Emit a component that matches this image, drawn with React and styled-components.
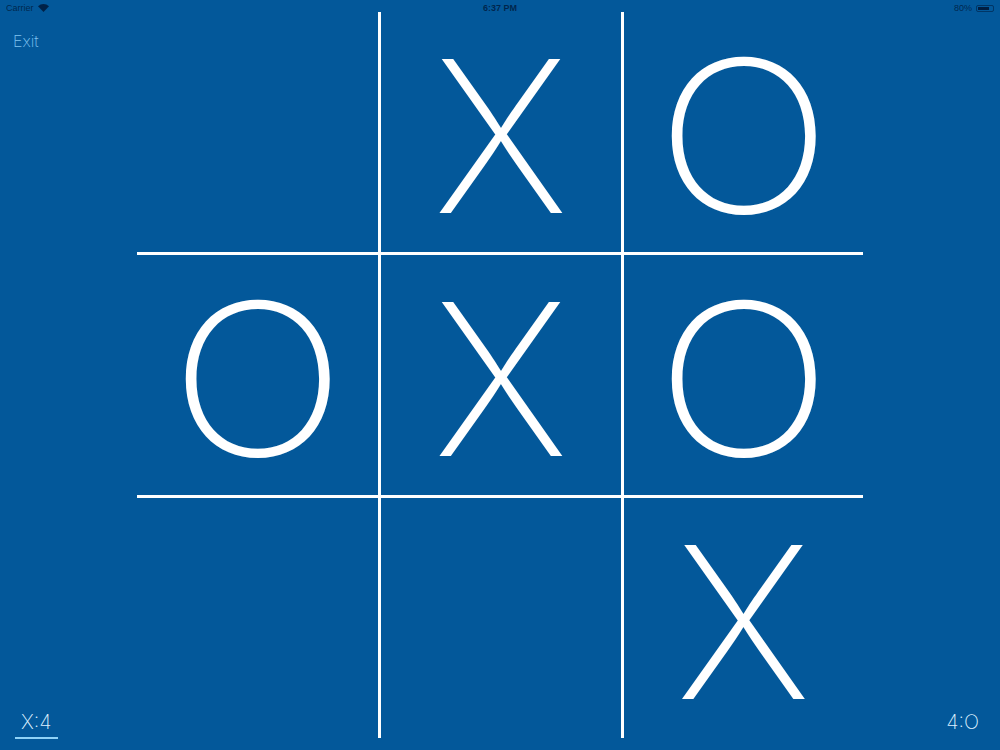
import styled, { createGlobalStyle } from "styled-components";

const GlobalStyle = createGlobalStyle`
  html, body {
    margin: 0;
    padding: 0;
    background: #03589a;
  }
  body {
    font-family: Inter, "Helvetica Neue", "Liberation Sans", sans-serif;
  }
`;

const board = ["", "X", "O", "O", "X", "O", "", "", "X"];

const Screen = styled.div`
  position: relative;
  width: 1000px;
  height: 750px;
  background: #03589a;
  overflow: hidden;
  display: flex;
  align-items: center;
  justify-content: center;
`;

const StatusBar = styled.div`
  position: absolute;
  top: 0;
  left: 0;
  right: 0;
  height: 16px;
  display: flex;
  align-items: center;
  justify-content: space-between;
  padding: 0 6px;
  font-family: "Liberation Sans", sans-serif;
  font-size: 9px;
  line-height: 1;
  color: rgba(0, 20, 50, 0.75);
  z-index: 1;
`;

const StatusSide = styled.div`
  display: flex;
  align-items: center;
  gap: 4px;
  width: 120px;
  justify-content: ${(p) => (p.$end ? "flex-end" : "flex-start")};
`;

const Clock = styled.div`
  font-weight: 700;
`;

const Battery = styled.div`
  width: 18px;
  height: 7px;
  border: 1px solid rgba(0, 20, 50, 0.5);
  border-radius: 2px;
  padding: 1px;
  box-sizing: border-box;
  &::before {
    content: "";
    display: block;
    width: 80%;
    height: 100%;
    background: rgba(0, 20, 50, 0.85);
  }
`;

const ExitButton = styled.button`
  position: absolute;
  top: 31px;
  left: 13px;
  background: none;
  border: none;
  padding: 0;
  font-family: Inter, "Liberation Sans", sans-serif;
  font-weight: 200;
  font-size: 16px;
  color: #80c4f0;
  cursor: pointer;
`;

const Board = styled.div`
  display: grid;
  grid-template-columns: 244px 243px 239px;
  grid-template-rows: 243px 243px 240px;
  width: 726px;
  height: 726px;
`;

const Cell = styled.div`
  display: flex;
  align-items: center;
  justify-content: center;
  box-sizing: border-box;
  border-right: ${(p) => (p.$col < 2 ? "3px solid #fff" : "none")};
  border-bottom: ${(p) => (p.$row < 2 ? "3px solid #fff" : "none")};
  padding-top: 10px;
`;

const Mark = styled.span`
  display: inline-block;
  font-family: Inter, "Helvetica Neue", "Liberation Sans", sans-serif;
  font-weight: 200;
  font-size: 212px;
  line-height: 0.8;
  color: #fff;
  transform: scaleX(${(p) => (p.$wide ? 1.1 : 1)});
`;

const Score = styled.div`
  position: absolute;
  bottom: 11px;
  ${(p) => (p.$right ? "right: 15px;" : "left: 15px;")}
  padding: 0 6px 4px;
  font-family: Inter, "Liberation Sans", sans-serif;
  font-weight: 200;
  font-size: 20px;
  line-height: 1.1;
  color: #dff1ff;
  border-bottom: 2px solid ${(p) => (p.$active ? "#8fd2f7" : "transparent")};
`;

function Wifi() {
  return (
    <svg width="11" height="8" viewBox="0 0 11 8">
      <path d="M5.5 8 L0 2.2 A8 8 0 0 1 11 2.2 Z" fill="rgba(0,20,50,0.8)" />
    </svg>
  );
}

export default function App() {
  return (
    <>
      <GlobalStyle />
      <Screen>
        <StatusBar>
          <StatusSide>
            <span>Carrier</span>
            <Wifi />
          </StatusSide>
          <Clock>6:37 PM</Clock>
          <StatusSide $end>
            <span>80%</span>
            <Battery />
          </StatusSide>
        </StatusBar>
        <ExitButton>Exit</ExitButton>
        <Board>
          {board.map((mark, i) => (
            <Cell key={i} $row={Math.floor(i / 3)} $col={i % 3}>
              {mark && <Mark $wide={mark === "O"}>{mark}</Mark>}
            </Cell>
          ))}
        </Board>
        <Score $active>X:4</Score>
        <Score $right>4:O</Score>
      </Screen>
    </>
  );
}
